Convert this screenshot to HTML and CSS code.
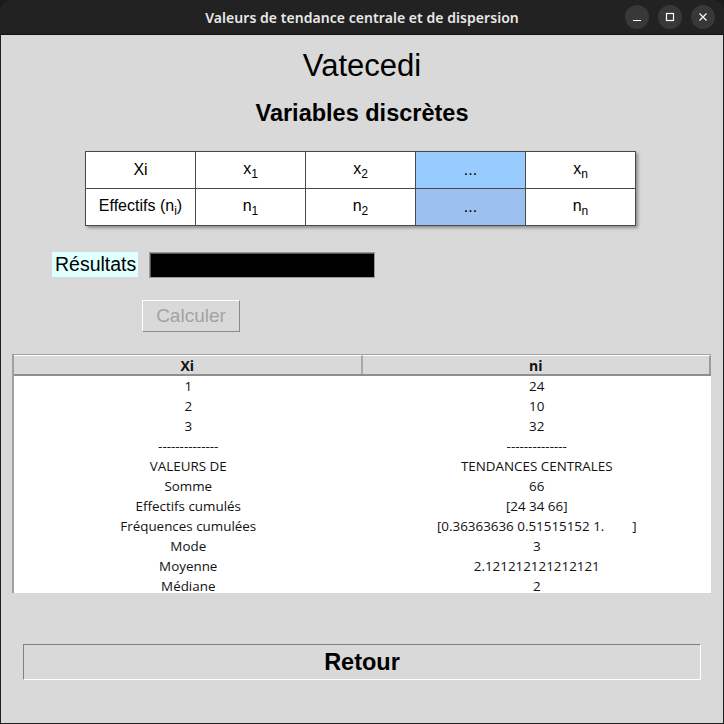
FILE: index.html
```html
<!DOCTYPE html>
<html lang="fr">
<head>
<meta charset="utf-8">
<title>Vatecedi</title>
<link rel="stylesheet" href="styles.css">
</head>
<body>
<div class="window">
  <div class="titlebar">
    <div class="title">Valeurs de tendance centrale et de dispersion</div>
    <div class="controls">
      <span class="ctl"><svg width="10" height="10" viewBox="0 0 10 10"><path d="M1 8.5h8" stroke="#fff" stroke-width="1.2"/></svg></span>
      <span class="ctl"><svg width="10" height="10" viewBox="0 0 10 10"><rect x="1.5" y="1.5" width="7" height="7" fill="none" stroke="#fff" stroke-width="1.2"/></svg></span>
      <span class="ctl"><svg width="10" height="10" viewBox="0 0 10 10"><path d="M1.5 1.5l7 7M8.5 1.5l-7 7" stroke="#fff" stroke-width="1.2"/></svg></span>
    </div>
  </div>
  <div class="content">
    <h1 class="app-name">Vatecedi</h1>
    <h2 class="subtitle">Variables discrètes</h2>
    <table class="grid">
      <tr>
        <td>Xi</td><td>x<sub>1</sub></td><td>x<sub>2</sub></td><td class="dots1">...</td><td>x<sub>n</sub></td>
      </tr>
      <tr>
        <td>Effectifs (n<sub>i</sub>)</td><td>n<sub>1</sub></td><td>n<sub>2</sub></td><td class="dots2">...</td><td>n<sub>n</sub></td>
      </tr>
    </table>
    <div class="result-row">
      <span class="result-label">Résultats</span>
      <span class="result-entry"></span>
    </div>
    <button class="calc" disabled>Calculer</button>
    <div class="tree">
      <div class="tree-head">
        <div class="th">Xi</div>
        <div class="th">ni</div>
      </div>
      <div class="tree-body">
        <div class="tr"><span>1</span><span>24</span></div>
        <div class="tr"><span>2</span><span>10</span></div>
        <div class="tr"><span>3</span><span>32</span></div>
        <div class="tr"><span>--------------</span><span>--------------</span></div>
        <div class="tr"><span>VALEURS DE</span><span>TENDANCES CENTRALES</span></div>
        <div class="tr"><span>Somme</span><span>66</span></div>
        <div class="tr"><span>Effectifs cumulés</span><span>[24 34 66]</span></div>
        <div class="tr"><span>Fréquences cumulées</span><span class="pre">[0.36363636 0.51515152 1.        ]</span></div>
        <div class="tr"><span>Mode</span><span>3</span></div>
        <div class="tr"><span>Moyenne</span><span>2.121212121212121</span></div>
        <div class="tr"><span>Médiane</span><span>2</span></div>
      </div>
    </div>
    <button class="back">Retour</button>
  </div>
</div>
</body>
</html>
```
FILE: styles.css
```css
* { box-sizing: border-box; }
html, body { margin: 0; padding: 0; }
body {
  width: 724px;
  height: 724px;
  background: #1a1a1a;
  overflow: hidden;
  font-family: "Liberation Sans", Arial, sans-serif;
}
.window {
  width: 724px;
  height: 724px;
  display: flex;
  flex-direction: column;
  background: #1e1e1e;
  border-radius: 10px 10px 0 0;
  overflow: hidden;
}
.titlebar {
  height: 35px;
  flex: none;
  background: #222222;
  display: flex;
  align-items: center;
  justify-content: center;
  position: relative;
  border-bottom: 1px solid #111;
}
.title {
  color: #e8e8e8;
  font-family: "Noto Sans", "DejaVu Sans", sans-serif;
  font-size: 14px;
  font-weight: 600;
  letter-spacing: 0.05px;
}
.controls {
  position: absolute;
  right: 9px;
  top: 5px;
  display: flex;
  gap: 9px;
}
.ctl {
  width: 24px;
  height: 24px;
  border-radius: 50%;
  background: #383838;
  display: flex;
  align-items: center;
  justify-content: center;
}
.content {
  flex: 1;
  margin: 0 1px 1px 1px;
  background: #d9d9d9;
  display: flex;
  flex-direction: column;
  align-items: flex-start;
}
.app-name {
  align-self: center;
  margin: 13px 0 0 0;
  font-weight: normal;
  font-size: 31px;
  line-height: 36px;
  color: #000;
}
.subtitle {
  align-self: center;
  margin: 15px 0 0 0;
  font-weight: bold;
  font-size: 23.5px;
  line-height: 28px;
  color: #000;
}
.grid {
  margin: 24px 0 0 84px;
  border-collapse: collapse;
  background: #fff;
  box-shadow: 2px 2px 3px rgba(0,0,0,0.35);
  font-size: 16px;
}
.grid td {
  width: 110px;
  height: 37px;
  border: 1px solid #4a4a4a;
  text-align: center;
  padding: 0;
  color: #000;
}
.grid sub { font-size: 12px; vertical-align: -4px; }
.grid .dots1 { background: #99ccfe; }
.grid .dots2 { background: #9cc1f0; }
.result-row {
  margin: 26px 0 0 51px;
  display: flex;
  align-items: flex-start;
  gap: 11px;
}
.result-label {
  background: #e0ffff;
  font-size: 19.5px;
  line-height: 25px;
  height: 25px;
  padding: 0 2px 0 3px;
  color: #000;
}
.result-entry {
  width: 226px;
  height: 26px;
  background: #000;
  border: 1px solid #9a9a9a;
  box-shadow: inset 1px 1px 0 #555;
}
.calc {
  margin: 22px 0 0 141px;
  width: 98px;
  height: 32px;
  background: #d9d9d9;
  border: 1px solid;
  border-color: #ffffff #8a8a8a #8a8a8a #ffffff;
  color: #a3a3a3;
  font-family: "Liberation Sans", Arial, sans-serif;
  font-size: 19px;
  padding: 0;
}
.tree {
  margin: 22px 0 0 11px;
  width: 699px;
  height: 239px;
  display: flex;
  flex-direction: column;
  border-left: 2px solid #a0a0a0;
  border-top: 1px solid #a0a0a0;
  background: #fff;
  font-family: "Open Sans", "Noto Sans", sans-serif;
  font-size: 13.4px;
  color: #111;
}
.tree-head {
  display: flex;
  height: 21px;
  background: #d9d9d9;
  border-bottom: 2px solid #8e8e8e;
}
.th {
  flex: 1;
  text-align: center;
  font-weight: bold;
  font-size: 14px;
  line-height: 19px;
  border-top: 1px solid #fff;
  border-right: 2px solid #9a9a9a;
}
.th:first-child { border-right: 2px solid #a8a8a8; }
.tree-body {
  flex: 1;
}
.tr {
  display: flex;
  height: 20px;
  line-height: 20px;
}
.tr span {
  flex: 1;
  text-align: center;
  white-space: pre;
}
.back {
  margin: 51px 0 0 22px;
  width: 678px;
  height: 36px;
  background: #d9d9d9;
  border: 1px solid;
  border-color: #808080 #ffffff #ffffff #808080;
  font-family: "Liberation Sans", Arial, sans-serif;
  font-weight: bold;
  font-size: 23.5px;
  color: #000;
  padding: 0;
}
```
